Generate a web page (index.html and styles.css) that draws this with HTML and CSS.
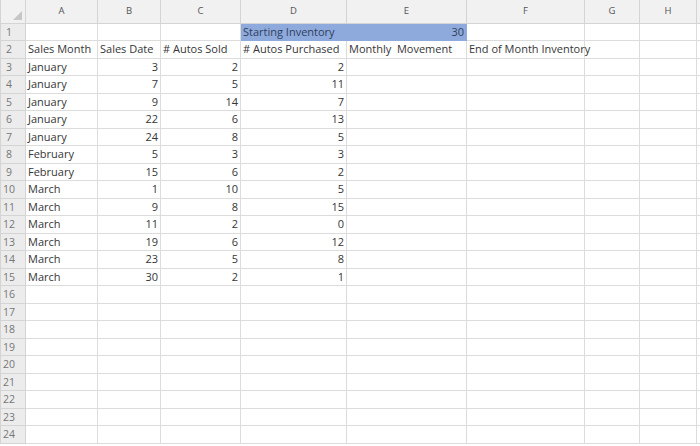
FILE: index.html
```html
<!DOCTYPE html>
<html lang="en">
<head>
    <meta charset="UTF-8">
    <title>Autos Inventory</title>
    <link rel="stylesheet" href="styles.css">
</head>
<body>
    <table class="sheet">
        <colgroup>
            <col class="c-row"><col class="c-a"><col class="c-b"><col class="c-c"><col class="c-d">
            <col class="c-e"><col class="c-f"><col class="c-g"><col class="c-h"><col class="c-end">
        </colgroup>
        <thead>
            <tr class="col-heads">
                <th class="corner"><span class="corner-mark"></span></th>
                <th>A</th><th>B</th><th>C</th><th>D</th><th>E</th><th>F</th><th>G</th><th>H</th><th class="end"></th>
            </tr>
        </thead>
        <tbody>
            <tr><th>1</th><td></td><td></td><td></td><td class="fill">Starting Inventory</td><td class="fill num">30</td><td></td><td></td><td></td><td class="end"></td></tr>
            <tr><th>2</th><td>Sales Month</td><td>Sales Date</td><td># Autos Sold</td><td># Autos Purchased</td><td>Monthly&nbsp; Movement</td><td class="spill">End of Month Inventory</td><td></td><td></td><td class="end"></td></tr>
            <tr><th>3</th><td>January</td><td class="num">3</td><td class="num">2</td><td class="num">2</td><td></td><td></td><td></td><td></td><td class="end"></td></tr>
            <tr><th>4</th><td>January</td><td class="num">7</td><td class="num">5</td><td class="num">11</td><td></td><td></td><td></td><td></td><td class="end"></td></tr>
            <tr><th>5</th><td>January</td><td class="num">9</td><td class="num">14</td><td class="num">7</td><td></td><td></td><td></td><td></td><td class="end"></td></tr>
            <tr><th>6</th><td>January</td><td class="num">22</td><td class="num">6</td><td class="num">13</td><td></td><td></td><td></td><td></td><td class="end"></td></tr>
            <tr><th>7</th><td>January</td><td class="num">24</td><td class="num">8</td><td class="num">5</td><td></td><td></td><td></td><td></td><td class="end"></td></tr>
            <tr><th>8</th><td>February</td><td class="num">5</td><td class="num">3</td><td class="num">3</td><td></td><td></td><td></td><td></td><td class="end"></td></tr>
            <tr><th>9</th><td>February</td><td class="num">15</td><td class="num">6</td><td class="num">2</td><td></td><td></td><td></td><td></td><td class="end"></td></tr>
            <tr><th>10</th><td>March</td><td class="num">1</td><td class="num">10</td><td class="num">5</td><td></td><td></td><td></td><td></td><td class="end"></td></tr>
            <tr><th>11</th><td>March</td><td class="num">9</td><td class="num">8</td><td class="num">15</td><td></td><td></td><td></td><td></td><td class="end"></td></tr>
            <tr><th>12</th><td>March</td><td class="num">11</td><td class="num">2</td><td class="num">0</td><td></td><td></td><td></td><td></td><td class="end"></td></tr>
            <tr><th>13</th><td>March</td><td class="num">19</td><td class="num">6</td><td class="num">12</td><td></td><td></td><td></td><td></td><td class="end"></td></tr>
            <tr><th>14</th><td>March</td><td class="num">23</td><td class="num">5</td><td class="num">8</td><td></td><td></td><td></td><td></td><td class="end"></td></tr>
            <tr><th>15</th><td>March</td><td class="num">30</td><td class="num">2</td><td class="num">1</td><td></td><td></td><td></td><td></td><td class="end"></td></tr>
            <tr><th>16</th><td></td><td></td><td></td><td></td><td></td><td></td><td></td><td></td><td class="end"></td></tr>
            <tr><th>17</th><td></td><td></td><td></td><td></td><td></td><td></td><td></td><td></td><td class="end"></td></tr>
            <tr><th>18</th><td></td><td></td><td></td><td></td><td></td><td></td><td></td><td></td><td class="end"></td></tr>
            <tr><th>19</th><td></td><td></td><td></td><td></td><td></td><td></td><td></td><td></td><td class="end"></td></tr>
            <tr><th>20</th><td></td><td></td><td></td><td></td><td></td><td></td><td></td><td></td><td class="end"></td></tr>
            <tr><th>21</th><td></td><td></td><td></td><td></td><td></td><td></td><td></td><td></td><td class="end"></td></tr>
            <tr><th>22</th><td></td><td></td><td></td><td></td><td></td><td></td><td></td><td></td><td class="end"></td></tr>
            <tr><th>23</th><td></td><td></td><td></td><td></td><td></td><td></td><td></td><td></td><td class="end"></td></tr>
            <tr><th>24</th><td></td><td></td><td></td><td></td><td></td><td></td><td></td><td></td><td class="end"></td></tr>
        </tbody>
    </table>
</body>
</html>
```

FILE: styles.css
```css
body {
    margin: 0;
    background-color: #fff;
    font-family: "Open Sans", "Liberation Sans", Arial, sans-serif;
    color: #363636;
}

.sheet {
    border-collapse: collapse;
    table-layout: fixed;
    width: 700px;
    font-size: 11px;
}

.c-row { width: 25px; }
.c-a { width: 72px; }
.c-b { width: 63px; }
.c-c { width: 80px; }
.c-d { width: 106px; }
.c-e { width: 120px; }
.c-f { width: 118px; }
.c-g { width: 55px; }
.c-h { width: 57px; }
.c-end { width: 4px; }

.sheet td,
.sheet th {
    border: 1px solid #dcdcdc;
    height: 17.5px;
    padding: 0 2px;
    white-space: nowrap;
    overflow: hidden;
    box-sizing: border-box;
    line-height: 16px;
}

.sheet td {
    text-align: left;
}

.sheet tbody th {
    background-color: #ececec;
    color: #777;
    font-weight: normal;
    text-align: center;
    padding: 0 8px 0 0;
    font-size: 10.5px;
    border-color: #d4d4d4;
}

.col-heads th {
    height: 23px;
    background-color: #f1f1f1;
    color: #555;
    font-weight: normal;
    font-size: 9.5px;
    text-align: center;
    border-color: #d4d4d4;
    border-top: none;
}

.col-heads th.end {
    border-left: 1px solid #999;
}

.corner {
    position: relative;
}

.corner-mark {
    position: absolute;
    right: 3px;
    bottom: 3px;
    width: 0;
    height: 0;
    border-left: 9px solid transparent;
    border-bottom: 9px solid #c6c6c6;
}

.sheet td.end {
    padding: 0;
    border-right: none;
}

.num {
    text-align: right !important;
}

.sheet td.fill {
    background-color: #8eaadc;
    color: #2f3f5c;
    border-color: #8eaadc;
}

.sheet td.spill {
    overflow: visible;
}
```
